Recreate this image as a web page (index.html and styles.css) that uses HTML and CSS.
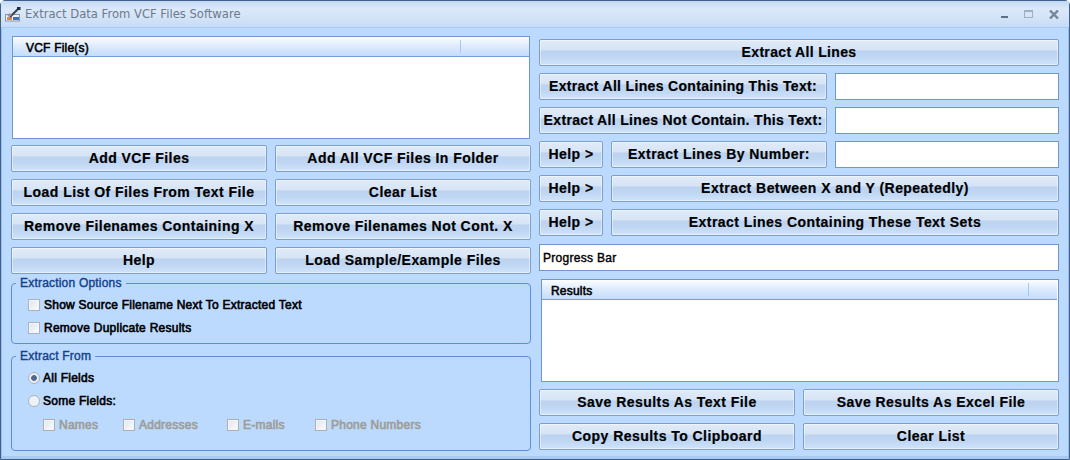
FILE: index.html
```html
<!DOCTYPE html>
<html lang="en">
<head>
<meta charset="utf-8">
<title>Extract Data From VCF Files Software</title>
<link rel="stylesheet" href="styles.css">
</head>
<body>
<div class="window">
  <header class="titlebar">
    <svg class="appicon" width="16" height="16" viewBox="0 0 16 16">
      <rect x="0.5" y="8.5" width="14" height="6.5" fill="#eef2f8" stroke="#8a97a8"/>
      <rect x="8" y="11" width="6" height="3" fill="#3f6fc0"/>
      <rect x="2" y="11" width="5" height="3" fill="#e08a3c"/>
      <path d="M5 11 L13 3" stroke="#39424e" stroke-width="2"/>
      <rect x="12" y="1" width="3.5" height="3" fill="#1d2a44"/>
      <path d="M2 9 L5 7 L7 9 L4 11 Z" fill="#8d97a3"/>
    </svg>
    <span class="title">Extract Data From VCF Files Software</span>
    <div class="winctrls">
      <span class="wc-min"></span>
      <span class="wc-max"></span>
      <svg class="wc-close" width="10" height="9" viewBox="0 0 10 9"><path d="M1 0.5 L9 8.5 M9 0.5 L1 8.5" stroke="#74859c" stroke-width="2.4"/></svg>
    </div>
  </header>
  <main class="content">
    <section class="left">
      <div class="listbox files">
        <div class="listhead"><span class="lh-label lh-files">VCF File(s)</span><span class="lh-sep lh-sep-files"></span></div>
      </div>
      <div class="btngrid">
        <button class="btn">Add VCF Files</button>
        <button class="btn">Add All VCF Files In Folder</button>
        <button class="btn">Load List Of Files From Text File</button>
        <button class="btn">Clear List</button>
        <button class="btn">Remove Filenames Containing X</button>
        <button class="btn">Remove Filenames Not Cont. X</button>
        <button class="btn">Help</button>
        <button class="btn">Load Sample/Example Files</button>
      </div>
      <fieldset class="group options">
        <legend>Extraction Options</legend>
        <label class="opt"><span class="check"></span>Show Source Filename Next To Extracted Text</label>
        <label class="opt"><span class="check"></span>Remove Duplicate Results</label>
      </fieldset>
      <fieldset class="group from">
        <legend>Extract From</legend>
        <label class="opt"><span class="radio on"></span>All Fields</label>
        <label class="opt"><span class="radio"></span>Some Fields:</label>
        <div class="fields">
          <label class="opt dis f1"><span class="check"></span>Names</label>
          <label class="opt dis f2"><span class="check"></span>Addresses</label>
          <label class="opt dis f3"><span class="check"></span>E-mails</label>
          <label class="opt dis"><span class="check"></span>Phone Numbers</label>
        </div>
      </fieldset>
    </section>
    <section class="right">
      <button class="btn tight">Extract All Lines</button>
      <div class="row">
        <button class="btn tight w288">Extract All Lines Containing This Text:</button>
        <div class="input"></div>
      </div>
      <div class="row">
        <button class="btn tight w288">Extract All Lines Not Contain. This Text:</button>
        <div class="input"></div>
      </div>
      <div class="row r-help">
        <button class="btn help">Help &gt;</button>
        <button class="btn w216">Extract Lines By Number:</button>
        <div class="input"></div>
      </div>
      <div class="row r-help">
        <button class="btn help">Help &gt;</button>
        <button class="btn grow">Extract Between X and Y (Repeatedly)</button>
      </div>
      <div class="row r-help">
        <button class="btn help">Help &gt;</button>
        <button class="btn grow">Extract Lines Containing These Text Sets</button>
      </div>
      <div class="progress">Progress Bar</div>
      <div class="listbox results">
        <div class="listhead"><span class="lh-label lh-results">Results</span><span class="lh-sep lh-sep-results"></span></div>
      </div>
      <div class="btngrid save">
        <button class="btn">Save Results As Text File</button>
        <button class="btn">Save Results As Excel File</button>
        <button class="btn">Copy Results To Clipboard</button>
        <button class="btn">Clear List</button>
      </div>
    </section>
  </main>
</div>
</body>
</html>
```
FILE: styles.css
```css
* { box-sizing: border-box; }
html, body { margin: 0; padding: 0; }
body {
  width: 1070px;
  height: 460px;
  overflow: hidden;
  font-family: "Liberation Sans", Arial, sans-serif;
  color: #000;
}
.window {
  width: 1070px;
  height: 460px;
  display: flex;
  flex-direction: column;
  background: #bcd9fe;
  border: 1px solid #3f5f8c;
  border-radius: 5px 5px 0 0;
  box-shadow: inset 1px 0 0 #9dbde8, inset -1px 0 0 #9dbde8, inset 0 -3px 0 #a9c9f3;
}
.titlebar {
  height: 27px;
  flex: none;
  display: flex;
  align-items: center;
  padding: 0 10px 0 4px;
  background: linear-gradient(#c3d9f3 0, #dbe8f9 30%, #d4e4f8 60%, #c6dcf6 100%);
  border-bottom: 1px solid #a9caf2;
}
.appicon { flex: none; margin-right: 4px; }
.title {
  font-family: "DejaVu Sans", sans-serif;
  font-size: 11.6px;
  color: #6e7a8c;
}
.winctrls { margin-left: auto; display: flex; align-items: center; gap: 16px; }
.wc-min { width: 7px; height: 2px; margin-top: 5px; background: #5e6f8a; }
.wc-max { width: 9px; height: 8px; border: 1px solid #9fb0c6; border-top-width: 2px; }
.wc-close { display: block; }
.content {
  flex: 1;
  display: flex;
  gap: 9px;
  padding: 8px 10px 0 9px;
}
.left { width: 520px; flex: none; display: flex; flex-direction: column; }
.right { width: 520px; flex: none; display: flex; flex-direction: column; gap: 7px; padding-top: 3px; }
.listbox {
  background: #fff;
  border: 1px solid #6f97cf;
}
.files { height: 103px; width: 518px; margin: 0 0 0 2px; }
.results { height: 103px; margin: 1px 0 0 2px; }
.listhead {
  height: 20px;
  display: flex;
  align-items: center;
  position: relative;
  padding-top: 2px;
  background: linear-gradient(#fbfdff 0, #dfecfd 45%, #c4dcfb 100%);
  border-bottom: 1px solid #6e9fdc;
  font-size: 12px;
  font-weight: 400;
}
.results .listhead { margin-right: 1px; }
.lh-label { -webkit-text-stroke: 0.55px #000; letter-spacing: 0.2px; }
.lh-files { margin-left: 13px; }
.lh-results { margin-left: 9px; }
.lh-sep { position: absolute; top: 3px; bottom: 3px; width: 1px; background: #a5c8f5; }
.lh-sep-files { left: 447px; }
.lh-sep-results { left: 486px; }
.btngrid {
  display: grid;
  grid-template-columns: 256px 256px;
  grid-auto-rows: 27px;
  column-gap: 8px;
  row-gap: 7px;
}
.left .btngrid { margin-top: 6px; margin-left: 1px; }
.save { margin-top: 0; }
.btn {
  height: 27px;
  padding: 0 0 2px;
  font-family: "Liberation Sans", Arial, sans-serif;
  font-size: 14px;
  font-weight: 700;
  letter-spacing: 0.45px;
  -webkit-text-stroke: 0.2px #000;
  color: #000;
  white-space: nowrap;
  border: 1px solid #7f9fcb;
  border-radius: 2px;
  background: linear-gradient(#e1ebf8 0, #d6e4f6 38%, #bdd3ef 45%, #c0d7f3 70%, #d0e4fb 100%);
  box-shadow: inset 0 0 0 1px rgba(255, 255, 255, .45);
}
.tight { letter-spacing: 0.33px; }
.row { display: flex; gap: 8px; }
.w288 { width: 288px; flex: none; }
.w216 { width: 216px; flex: none; }
.help { width: 64px; flex: none; }
.grow { flex: 1; }
.input {
  flex: 1;
  height: 27px;
  background: #fff;
  border: 1px solid #6f97cf;
}
.progress {
  height: 27px;
  margin-top: 1px;
  background: #fff;
  border: 1px solid #6f97cf;
  display: flex;
  align-items: center;
  padding-left: 3px;
  font-size: 12px;
  -webkit-text-stroke: 0.4px #000;
  letter-spacing: 0.3px;
}
.group {
  margin: 0 0 0 1px;
  width: 520px;
  padding: 0;
  border: 1px solid #5f8fd3;
  border-radius: 4px;
}
.group legend {
  margin-left: -12px;
  padding: 0 4px;
  font-size: 12px;
  line-height: 14px;
  color: #12428a;
  -webkit-text-stroke: 0.4px #12428a;
  letter-spacing: 0.2px;
}
.options { height: 68px; margin-top: 2px; padding: 7px 0 0 16px; }
.from { height: 102px; margin-top: 5px; padding: 7px 0 0 16px; }
.opt {
  display: flex;
  align-items: center;
  height: 16px;
  margin-bottom: 7px;
  font-size: 12px;
  letter-spacing: 0.25px;
  -webkit-text-stroke: 0.6px #000;
}
.check {
  width: 12px;
  height: 12px;
  margin-right: 4px;
  background: linear-gradient(135deg, #dfe5ed, #fbfcfe);
  border: 1px solid #a9b4c3;
  box-shadow: inset 0 0 0 1px #f3f5f8;
}
.radio {
  width: 12px;
  height: 12px;
  margin-right: 3px;
  border-radius: 50%;
  background: #eef1f5;
  border: 1px solid #a9b4c3;
}
.radio.on { background: radial-gradient(circle, #50688c 0, #50688c 2.5px, #e9edf3 3.2px); }
.fields { display: flex; margin: 8px 0 0 15px; }
.dis { color: #9d9d95; -webkit-text-stroke: 0.6px #9d9d95; }
.dis .check { border-color: #aeb0ae; }
.f1 { width: 80px; }
.f2 { width: 104px; }
.f3 { width: 88px; }
```
